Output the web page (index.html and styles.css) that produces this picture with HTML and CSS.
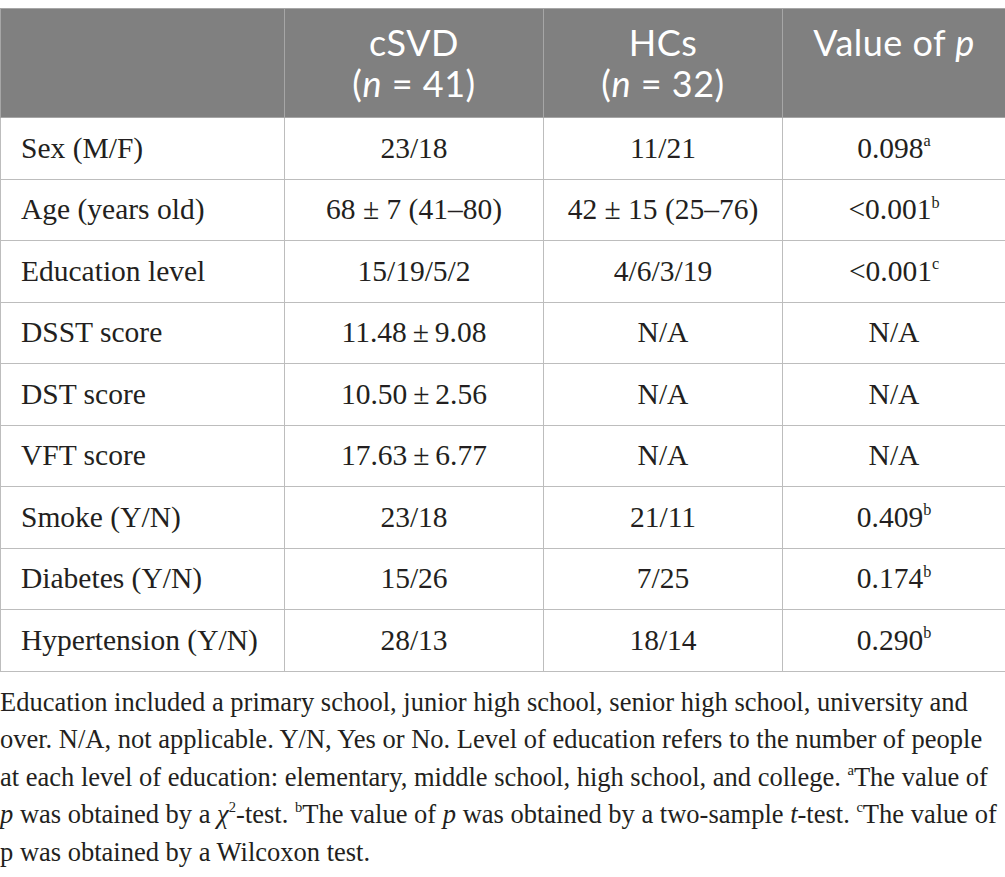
FILE: index.html
```html
<!DOCTYPE html>
<html lang="en">
<head>
    <meta charset="UTF-8">
    <meta name="viewport" content="width=device-width, initial-scale=1.0">
    <title>Table 1 - Demographic and clinical characteristics</title>
    <link rel="stylesheet" href="styles.css">
</head>
<body>

<div class="table-wrap">
    <table class="demo-table">
        <thead>
            <tr>
                <th class="col-label"></th>
                <th class="col-csvd">cSVD<br>(<i>n</i> = 41)</th>
                <th class="col-hc">HCs<br>(<i>n</i> = 32)</th>
                <th class="col-p">Value of <i>p</i></th>
            </tr>
        </thead>
        <tbody>
            <tr>
                <td class="row-label">Sex (M/F)</td>
                <td>23/18</td>
                <td>11/21</td>
                <td>0.098<sup>a</sup></td>
            </tr>
            <tr>
                <td class="row-label">Age (years old)</td>
                <td>68 ± 7 (41–80)</td>
                <td>42 ± 15 (25–76)</td>
                <td>&lt;0.001<sup>b</sup></td>
            </tr>
            <tr>
                <td class="row-label">Education level</td>
                <td>15/19/5/2</td>
                <td>4/6/3/19</td>
                <td>&lt;0.001<sup>c</sup></td>
            </tr>
            <tr>
                <td class="row-label">DSST score</td>
                <td>11.48&thinsp;±&thinsp;9.08</td>
                <td>N/A</td>
                <td>N/A</td>
            </tr>
            <tr>
                <td class="row-label">DST score</td>
                <td>10.50&thinsp;±&thinsp;2.56</td>
                <td>N/A</td>
                <td>N/A</td>
            </tr>
            <tr>
                <td class="row-label">VFT score</td>
                <td>17.63&thinsp;±&thinsp;6.77</td>
                <td>N/A</td>
                <td>N/A</td>
            </tr>
            <tr>
                <td class="row-label">Smoke (Y/N)</td>
                <td>23/18</td>
                <td>21/11</td>
                <td>0.409<sup>b</sup></td>
            </tr>
            <tr>
                <td class="row-label">Diabetes (Y/N)</td>
                <td>15/26</td>
                <td>7/25</td>
                <td>0.174<sup>b</sup></td>
            </tr>
            <tr>
                <td class="row-label">Hypertension (Y/N)</td>
                <td>28/13</td>
                <td>18/14</td>
                <td>0.290<sup>b</sup></td>
            </tr>
        </tbody>
    </table>

    <p class="table-note">Education included a primary school, junior high school, senior high school, university and over. N/A, not applicable. Y/N, Yes or No. Level of education refers to the number of people at each level of education: elementary, middle school, high school, and college. <sup>a</sup>The value of <i>p</i> was obtained by a <i>χ</i><sup>2</sup>-test. <sup>b</sup>The value of <i>p</i> was obtained by a two-sample <i>t</i>-test. <sup>c</sup>The value of p was obtained by a Wilcoxon test.</p>
</div>

</body>
</html>
```

FILE: styles.css
```css
body {
    margin: 0;
    padding: 0;
    background-color: #fff;
    color: #231f20;
    font-family: "Liberation Serif", "Times New Roman", serif;
}
.table-wrap {
    padding-top: 8px;
    width: 1005px;
}
.demo-table {
    width: 1005px;
    border-collapse: collapse;
    table-layout: fixed;
}
.demo-table th, .demo-table td {
    border: 1px solid #bdbdbd;
}
.demo-table th {
    background-color: #808080;
    color: #fff;
    font-family: Lato, "Open Sans", sans-serif;
    font-weight: 400;
    font-size: 36px;
    letter-spacing: 0.5px;
    line-height: 41px;
    text-align: center;
    vertical-align: top;
    height: 109px;
    padding: 13px 8px 0;
    box-sizing: border-box;
    border-color: #a6a6a6;
}
.col-label {
    width: 284px;
}
.col-csvd {
    width: 259px;
}
.col-hc {
    width: 239px;
}
.col-p {
    width: 223px;
}
.demo-table td {
    height: 60.5px;
    padding: 0 10px;
    text-align: center;
    font-size: 29.5px;
}
.demo-table td.row-label {
    text-align: left;
    padding-left: 20px;
}
.demo-table sup {
    font-size: 0.55em;
    line-height: 1;
    vertical-align: baseline;
    position: relative;
    top: -0.7em;
}
.table-note {
    margin: 12px 0 0;
    font-size: 26.5px;
    line-height: 37.5px;
}
.table-note sup {
    font-size: 0.55em;
    line-height: 1;
    vertical-align: baseline;
    position: relative;
    top: -0.75em;
}
```
